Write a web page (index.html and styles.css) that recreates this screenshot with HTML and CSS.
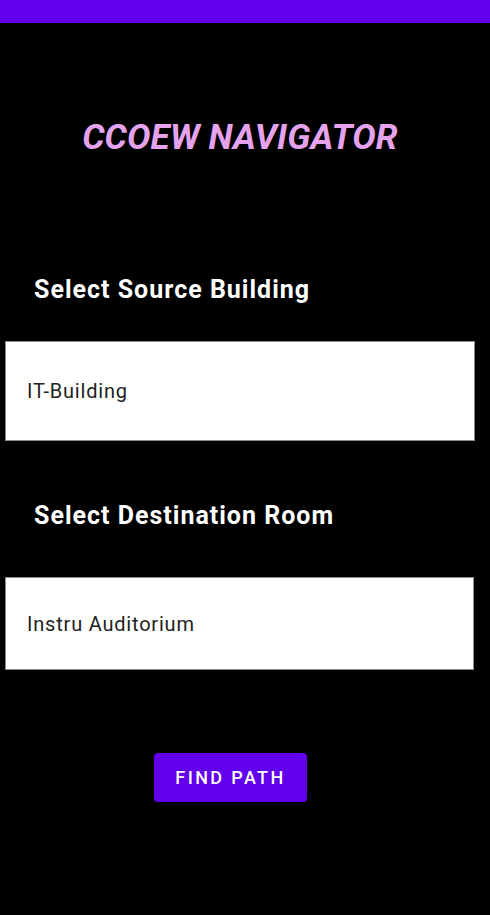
FILE: index.html
```html
<!DOCTYPE html>
<html lang="en">
<head>
    <meta charset="UTF-8">
    <title>CCOEW Navigator</title>
    <link rel="stylesheet" href="styles.css">
</head>
<body>
<div class="top-bar"></div>

<div class="main">
    <h1 class="title">CCOEW NAVIGATOR</h1>

    <h2 class="label label-source">Select Source Building</h2>
    <div class="spinner spinner-source">IT-Building</div>

    <h2 class="label label-dest">Select Destination Room</h2>
    <div class="spinner spinner-dest">Instru Auditorium</div>

    <div class="btn-row">
        <button class="find-btn">FIND PATH</button>
    </div>
</div>
</body>
</html>
```

FILE: styles.css
```css
* {
    padding: 0;
    margin: 0;
    box-sizing: border-box;
}
html, body {
    background-color: #000000;
}
body {
    width: 490px;
    height: 915px;
    overflow: hidden;
    font-family: Roboto, "Liberation Sans", sans-serif;
}
.top-bar {
    height: 23px;
    background-color: #6200ee;
}
.main {
    width: 470px;
    margin-left: 5px;
}
.title {
    margin-top: 95px;
    height: 40px;
    line-height: 40px;
    font-size: 35px;
    font-weight: 700;
    font-style: italic;
    letter-spacing: 0.2px;
    text-align: center;
    color: #e5a3ee;
}
.label {
    height: 30px;
    line-height: 30px;
    font-size: 25px;
    font-weight: 700;
    letter-spacing: 1px;
    color: #ffffff;
    padding-left: 29px;
}
.label-source {
    margin-top: 117px;
}
.label-dest {
    margin-top: 60px;
}
.spinner {
    display: flex;
    align-items: center;
    background-color: #ffffff;
    border: 1px solid #8a8a8a;
    padding-left: 21px;
    font-size: 20px;
    line-height: 24px;
    letter-spacing: 0.8px;
    color: #222222;
}
.spinner-source {
    margin-top: 36px;
    height: 100px;
}
.spinner-dest {
    margin-top: 46px;
    height: 93px;
    width: 469px;
}
.btn-row {
    margin-top: 83px;
    padding-left: 149px;
}
.find-btn {
    width: 153px;
    height: 49px;
    border: none;
    border-radius: 4px;
    background-color: #6200ee;
    color: #ffffff;
    font-family: Roboto, "Liberation Sans", sans-serif;
    font-size: 18px;
    font-weight: 500;
    letter-spacing: 2.4px;
}
```
